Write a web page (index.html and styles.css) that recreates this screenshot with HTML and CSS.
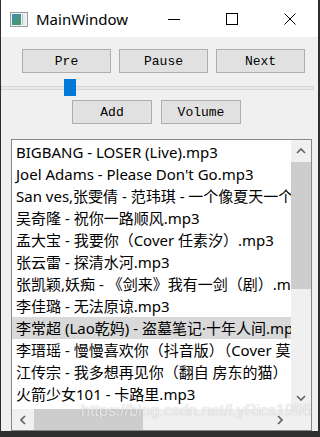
FILE: index.html
```html
<!DOCTYPE html>
<html lang="zh-CN">
<head>
    <meta charset="UTF-8">
    <meta name="viewport" content="width=device-width, initial-scale=1.0">
    <title>MainWindow</title>
    <link rel="stylesheet" href="styles.css">
</head>
<body>
    <div class="window">
        <div class="titlebar">
            <svg class="app-icon" width="18" height="15" viewBox="0 0 18 15">
                <defs>
                    <linearGradient id="pane" x1="0" y1="0" x2="1" y2="1">
                        <stop offset="0" stop-color="#3d8bb8"/>
                        <stop offset="1" stop-color="#4e9a5a"/>
                    </linearGradient>
                </defs>
                <rect x="0.5" y="0.5" width="17" height="14" fill="#f4f4f4" stroke="#9a9a9a"/>
                <rect x="2" y="2" width="9" height="11" fill="url(#pane)"/>
                <rect x="12.5" y="2" width="3.5" height="11" fill="#e8eef2"/>
                <rect x="12" y="2" width="1" height="11" fill="#b9c3cb"/>
            </svg>
            <span class="title">MainWindow</span>
            <div class="controls">
                <svg width="12" height="12" viewBox="0 0 12 12"><line x1="0" y1="6.5" x2="12" y2="6.5" stroke="#000" stroke-width="1"/></svg>
                <svg width="12" height="12" viewBox="0 0 12 12"><rect x="0.5" y="0.5" width="11" height="11" fill="none" stroke="#000" stroke-width="1"/></svg>
                <svg width="12" height="12" viewBox="0 0 12 12"><path d="M0.5 0.5 L11.5 11.5 M11.5 0.5 L0.5 11.5" stroke="#000" stroke-width="1"/></svg>
            </div>
        </div>

        <div class="client">
            <div class="btn-row top-row">
                <button class="btn">Pre</button>
                <button class="btn">Pause</button>
                <button class="btn">Next</button>
            </div>

            <div class="slider">
                <div class="groove"></div>
                <div class="handle"></div>
            </div>

            <div class="btn-row mid-row">
                <button class="btn">Add</button>
                <button class="btn">Volume</button>
            </div>

            <div class="listbox">
                <div class="list-area">
                    <div class="items">
                        <div class="row">BIGBANG - LOSER (Live).mp3</div>
                        <div class="row">Joel Adams - Please Don't Go.mp3</div>
                        <div class="row">San ves,张雯倩 - 范玮琪 - 一个像夏天一个像秋天.mp3</div>
                        <div class="row">吴奇隆 - 祝你一路顺风.mp3</div>
                        <div class="row">孟大宝 - 我要你（Cover 任素汐）.mp3</div>
                        <div class="row">张云雷 - 探清水河.mp3</div>
                        <div class="row">张凯颖,妖痴 - 《剑来》我有一剑（剧）.mp3</div>
                        <div class="row">李佳璐 - 无法原谅.mp3</div>
                        <div class="row selected">李常超 (Lao乾妈) - 盗墓笔记·十年人间.mp3</div>
                        <div class="row">李瑨瑶 - 慢慢喜欢你（抖音版）（Cover 莫文蔚）.mp3</div>
                        <div class="row">江传宗 - 我多想再见你（翻自 房东的猫）</div>
                        <div class="row">火箭少女101 - 卡路里.mp3</div>
                    </div>
                    <div class="vscroll">
                        <div class="arrow-btn v-btn">
                            <svg width="10" height="6" viewBox="0 0 10 6"><polyline points="1,5 5,1 9,5" fill="none" stroke="#606060" stroke-width="1.6"/></svg>
                        </div>
                        <div class="v-thumb"></div>
                        <div class="v-track"></div>
                        <div class="arrow-btn v-btn">
                            <svg width="10" height="6" viewBox="0 0 10 6"><polyline points="1,1 5,5 9,1" fill="none" stroke="#606060" stroke-width="1.6"/></svg>
                        </div>
                    </div>
                </div>
                <div class="hscroll-row">
                    <div class="hscroll">
                        <div class="arrow-btn h-btn">
                            <svg width="6" height="10" viewBox="0 0 6 10"><polyline points="5,1 1,5 5,9" fill="none" stroke="#606060" stroke-width="1.6"/></svg>
                        </div>
                        <div class="h-thumb"></div>
                        <div class="h-track"></div>
                        <div class="arrow-btn h-btn">
                            <svg width="6" height="10" viewBox="0 0 6 10"><polyline points="1,1 5,5 1,9" fill="none" stroke="#606060" stroke-width="1.6"/></svg>
                        </div>
                    </div>
                    <div class="corner"></div>
                </div>
            </div>
        </div>

        <span class="watermark">https://blog.csdn.net/LyRics1996</span>
    </div>
</body>
</html>
```

FILE: styles.css
```css
body {
    margin: 0;
    padding: 0;
    background-color: #2e2e2e;
    font-family: "Noto Sans", "Noto Sans CJK SC", sans-serif;
}

.window {
    position: relative;
    width: 317px;
    height: 431px;
    margin-left: 1px;
    background-color: #f0f0f0;
    overflow: hidden;
}

/* title bar */
.titlebar {
    height: 37px;
    background-color: #fff;
    display: flex;
    align-items: center;
}

.app-icon {
    margin-left: 9px;
    margin-top: 1px;
}

.title {
    margin-left: 8px;
    font-family: "Noto Sans", sans-serif;
    font-size: 15px;
    color: #000;
    margin-top: 1px;
}

.controls {
    margin-left: auto;
    display: flex;
    align-items: center;
    gap: 46px;
    margin-right: 22px;
    margin-top: 1px;
}

/* client area */
.client {
    display: flex;
    flex-direction: column;
}

.btn-row {
    display: flex;
    gap: 8px;
}

.top-row {
    margin-top: 12px;
    padding-left: 21px;
}

.mid-row {
    margin-top: 4px;
    padding-left: 71px;
    gap: 9px;
}

.btn {
    height: 24px;
    padding: 0;
    margin: 0;
    background-color: #e1e1e1;
    border: 1px solid #adadad;
    font-family: "Liberation Mono", monospace;
    font-size: 13px;
    color: #000;
}

.top-row .btn {
    width: 89px;
}

.mid-row .btn {
    width: 80px;
}

/* slider */
.slider {
    margin-top: 6px;
    height: 17px;
    display: grid;
    align-items: center;
}

.groove,
.handle {
    grid-area: 1 / 1;
}

.groove {
    width: 311px;
    height: 2px;
    background-color: #e7eaea;
    border: 1px solid #d6d6d6;
}

.handle {
    width: 12px;
    height: 17px;
    margin-left: 63px;
    background-color: #0078d7;
}

/* list */
.listbox {
    margin-top: 15px;
    margin-left: 10px;
    width: 299px;
    height: 290px;
    border: 1px solid #828790;
    background-color: #fff;
    display: flex;
    flex-direction: column;
}

.list-area {
    flex: 1;
    display: flex;
    min-height: 0;
}

.items {
    flex: 1;
    overflow: hidden;
    padding-top: 1px;
}

.row {
    height: 22px;
    line-height: 22px;
    padding-left: 4px;
    font-size: 15px;
    color: #000;
    white-space: nowrap;
}

.row.selected {
    background-color: #d9d9d9;
}

.vscroll {
    width: 20px;
    background-color: #f0f0f0;
    display: flex;
    flex-direction: column;
}

.arrow-btn {
    display: flex;
    align-items: center;
    justify-content: center;
}

.v-btn {
    height: 22px;
}

.v-thumb {
    height: 127px;
    background-color: #cdcdcd;
}

.v-track {
    flex: 1;
}

.hscroll-row {
    height: 21px;
    display: flex;
}

.hscroll {
    flex: 1;
    display: flex;
    background-color: #f0f0f0;
}

.h-btn {
    width: 22px;
}

.h-thumb {
    width: 109px;
    background-color: #cdcdcd;
}

.h-track {
    flex: 1;
}

.corner {
    width: 20px;
    background-color: #f0f0f0;
}

.watermark {
    position: absolute;
    left: 80px;
    top: 402px;
    font-family: "Liberation Sans", sans-serif;
    font-size: 16px;
    color: rgba(255, 255, 255, 0.75);
    text-shadow: 0 0 1px rgba(0, 0, 0, 0.25);
    white-space: nowrap;
}
```
